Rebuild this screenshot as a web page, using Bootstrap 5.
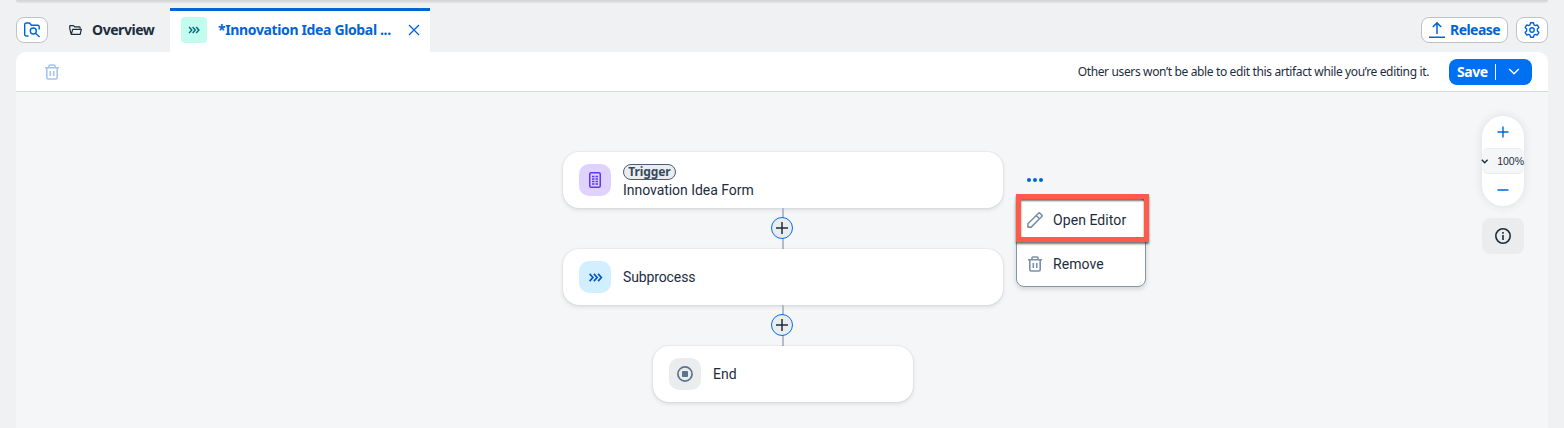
<!DOCTYPE html>
<html lang="en">
<head>
<meta charset="utf-8">
<meta name="viewport" content="width=device-width, initial-scale=1">
<title>Process Builder</title>
<link rel="stylesheet" href="https://cdn.jsdelivr.net/npm/bootstrap@5.3.0/dist/css/bootstrap.min.css">
<style>
body{font-family:Roboto,"Liberation Sans",sans-serif;font-size:14px;line-height:18px;color:#1d2d3e;background:#eff1f2;height:428px;overflow:hidden}
svg{display:block;flex:none;fill:none;stroke:currentColor;overflow:visible}
.strong-text{font-family:"Noto Sans",sans-serif;font-weight:700;letter-spacing:-.44px}
.shell-edge{height:8px;margin:0 16px}
.shell-edge::before{content:"";display:block;height:3px;border-radius:0 0 6px 6px;background:linear-gradient(#d2d3d5,#e4e5e7)}
.shell-edge,.tab-strip{flex:none}
.tab-strip{height:44px;padding:0 16px}
.tool-btn{height:26px;margin-top:9px;padding:0;border:1px solid #bcc3ca;border-radius:8px;background:#fff;color:#0064d9;line-height:18px}
.square-btn{width:32px}
.release-btn{width:87px}
.tab-plain{width:122px;padding-left:21px}
.tab-active{width:260px;height:44px;background:#fff;border-top:3px solid #0064d9;padding:0 10px 3px 11px;color:#0064d9}
.tab-icon{width:26px;height:26px;border-radius:4px;background:#c2fcee;color:#046c7a}
.tab-title{margin-left:11px;letter-spacing:-.36px}
.page-panel{margin:0 16px;background:#f5f6f7;flex:1;border-radius:10px 10px 0 0}
.bar{height:40px;background:#fff;border-bottom:1px solid #d5dadd;border-radius:10px 10px 0 0;padding:0 16px 0 28px}
.note{font-family:"Noto Sans",sans-serif;font-size:12px;letter-spacing:-.36px}
.save-btn{width:83px;height:26px;margin-left:20px;background:#0070f2;border-radius:8px;color:#fff;border:0;padding:0 12px 0 8px}
.save-btn i{width:1px;height:16px;margin-left:7px;background:#fff}
.canvas{background:#f5f6f7;padding-top:60px}
.flow{padding-left:2px}
.node{width:440px;height:56px;border-radius:16px;background:#fff;padding-left:16px;box-shadow:0 0 2px rgba(34,53,72,.14),0 2px 4px rgba(34,53,72,.12)}
.node-end{width:260px}
.node-icon{width:32px;height:32px;border-radius:10px;margin-right:12px}
.trigger{width:53px;height:16px;margin-top:2px;border:1px solid #475e75;border-radius:8px;background:#eaecee;color:#354a5f;font-size:12px;line-height:14px;letter-spacing:-.1px}
.link-line{height:41px;width:2px;padding-bottom:2px;background:#b3bcca}
.plus{width:22px;height:22px;margin-left:-2px;border:1.5px solid #0070f2;border-radius:50%;background:#eaecee;flex:none}
.more{left:1011px;top:86px;color:#0064d9}
.popup{left:1000px;top:105px;width:130px;height:90px;border:1px solid #8396a8;border-radius:8px;background:#fff;box-shadow:0 2px 5px rgba(34,53,72,.18)}
.popup .entry{height:44px;padding-left:10px;gap:10px}
.popup svg{color:#7b91a8}
.callout{left:1000px;top:102px;width:133px;height:48px;border:5px solid #ff5a4b;box-shadow:0 2px 2px rgba(0,0,0,.55),inset 0 2px 2px rgba(0,0,0,.55)}
.zoomer{right:24px;top:24px;width:42px}
.pill{height:90px;background:#fff;border-radius:21px;box-shadow:0 0 10px rgba(34,53,72,.12);color:#0064d9}
.zoom-step{height:32px}
.percent{height:26px;border:1px solid #eaecee;border-left:0;border-right:0;border-radius:6px;background:#f5f6f7;font-size:10.500px;font-family:"Liberation Sans",sans-serif;color:#1d2d3e}
.info{height:36px;margin-top:12px;border-radius:8px;background:#eaecee}
</style>
</head>
<body class="d-flex flex-column">
<svg width="0" height="0" class="position-absolute"><defs>
<symbol id="bin" viewBox="0 0 16 16"><path d="M1 3.800h14M5 3.500V1.800Q5 1 5.800 1h4.400Q11 1 11 1.800v1.700M2.800 4v9.600Q2.800 15 4.200 15h7.600q1.400 0 1.400-1.400V4M6.300 7v5M9.700 7v5" fill="none" stroke="currentColor" stroke-width="1.600"/></symbol>
<symbol id="chevrons" viewBox="0 0 16 10"><path d="M1.500 1l3.600 4-3.600 4M6.200 1l3.600 4-3.600 4M10.900 1l3.600 4-3.600 4" fill="none" stroke="currentColor" stroke-width="1.900"/></symbol>
</defs></svg>
<div class="shell-edge"></div>
<header class="tab-strip d-flex align-items-start">
  <button class="tool-btn square-btn d-flex align-items-center justify-content-center" aria-label="Browse">
    <svg width="16" height="16" viewBox="0 0 16 16" stroke-width="1.400"><path d="M4.500 14H2.300Q.7 14 .7 12.400V2.500Q.7 1 2.200 1h3.300l1.900 2.200h6.300q1.500 0 1.500 1.500v2.800M11.500 11.200L15.600 15"/><circle cx="9.300" cy="9" r="3"/></svg>
  </button>
  <div class="tab-plain d-flex align-items-center h-100">
    <svg width="13" height="10" viewBox="0 0 13 10" stroke-width="1.200"><path d="M2 9L.7 2.800V1.400Q.7.600 1.500.6h2.900l1.300 1.200h4.600q.8 0 .8.800v1M2.300 9.300h8.900l1.100-4.900H3.700z" stroke-linejoin="round"/></svg>
    <span class="strong-text text-nowrap" style="margin-left:10px">Overview</span>
  </div>
  <div class="tab-active d-flex align-items-center">
    <span class="tab-icon d-flex align-items-center justify-content-center"><svg width="12" height="8"><use href="#chevrons"/></svg></span>
    <span class="strong-text tab-title text-nowrap">*Innovation Idea Global ...</span>
    <svg class="ms-auto" width="12" height="12" viewBox="0 0 12 12" stroke-width="1.300"><path d="M1 1l10 10M11 1L1 11"/></svg>
  </div>
  <div class="d-flex ms-auto gap-2">
    <button class="tool-btn release-btn d-flex align-items-center">
      <svg style="margin-left:7px" width="16" height="16" viewBox="0 0 16 16" stroke-width="1.500"><path d="M0 15.200h16M8 12V1M3.800 5L8 .900 12.200 5"/></svg>
      <span class="strong-text" style="margin-left:5px;letter-spacing:-.54px">Release</span>
    </button>
    <button class="tool-btn square-btn d-flex align-items-center justify-content-center" aria-label="Settings">
      <svg width="16" height="16" viewBox="0 0 16 16" stroke-width="1.400" stroke-linejoin="round"><path d="M6.500.8h3l.5 2 1.400.8 2-.6 1.500 2.600L13.400 7v2l1.500 1.400-1.500 2.600-2-.6-1.400.8-.5 2h-3l-.5-2-1.400-.8-2 .6-1.500-2.600L2.600 9V7L1.100 5.600 2.600 3l2 .6L6 2.800z"/><circle cx="8" cy="8" r="2.200"/></svg>
    </button>
  </div>
</header>
<main class="page-panel d-flex flex-column">
  <div class="bar d-flex align-items-center">
    <svg width="16" height="16" style="color:#a6c4f1"><use href="#bin"/></svg>
    <span class="note ms-auto text-nowrap">Other users won’t be able to edit this artifact while you’re editing it.</span>
    <button class="save-btn d-flex align-items-center">
      <span class="strong-text">Save</span><i></i>
      <svg class="ms-auto" width="12" height="7" viewBox="0 0 12 7" stroke-width="1.500"><path d="M1.200 1L6 5.800 10.800 1"/></svg>
    </button>
  </div>
  <section class="canvas position-relative flex-fill">
    <div class="flow d-flex flex-column align-items-center">
      <article class="node d-flex align-items-center">
        <span class="node-icon d-flex align-items-center justify-content-center" style="background:#dfd2ff;color:#5d36ff"><svg width="12" height="16" viewBox="0 0 12 16" stroke-width="1.500"><rect x=".75" y=".75" width="10.500" height="14.500" rx="1.500"/><path d="M3 4.500h2.500M6.500 4.500H9M3 7h2.500M6.500 7H9M3 9.500h2.500M6.500 9.500H9M3 12h2.500M6.500 12H9" stroke-width="1.300"/></svg></span>
        <div><div class="trigger strong-text text-center">Trigger</div><div style="margin-top:1px;letter-spacing:-.04px">Innovation Idea Form</div></div>
      </article>
      <div class="link-line d-flex align-items-center justify-content-center"><span class="plus d-flex align-items-center justify-content-center"><svg width="12" height="12" viewBox="0 0 12 12" stroke-width="1.500"><path d="M6 0v12M0 6h12"/></svg></span></div>
      <article class="node d-flex align-items-center">
        <span class="node-icon d-flex align-items-center justify-content-center" style="background:#d1efff;color:#0057d2"><svg width="15" height="9"><use href="#chevrons"/></svg></span>
        <span style="letter-spacing:-.12px">Subprocess</span>
      </article>
      <div class="link-line d-flex align-items-center justify-content-center"><span class="plus d-flex align-items-center justify-content-center"><svg width="12" height="12" viewBox="0 0 12 12" stroke-width="1.500"><path d="M6 0v12M0 6h12"/></svg></span></div>
      <article class="node node-end d-flex align-items-center">
        <span class="node-icon d-flex align-items-center justify-content-center" style="background:#eaecee;color:#5b738b"><svg width="16" height="16" viewBox="0 0 16 16" stroke-width="1.700"><circle cx="8" cy="8" r="7.100"/><rect x="5" y="5" width="6" height="6" rx=".8" fill="currentColor" stroke="none"/></svg></span>
        <span>End</span>
      </article>
    </div>
    <svg class="more position-absolute" width="16" height="4" viewBox="0 0 16 4"><g fill="currentColor" stroke="none"><circle cx="2" cy="2" r="2"/><circle cx="8" cy="2" r="2"/><circle cx="14" cy="2" r="2"/></g></svg>
    <div class="popup position-absolute">
      <div class="entry d-flex align-items-center"><svg width="16" height="16" viewBox="0 0 16 16" stroke-width="1.600" stroke-linejoin="round"><path d="M.900 15.100V11.800L11.500 1.200q.7-.7 1.400 0l1.900 1.900q.7.700 0 1.400L4.200 15.100zM9.200 3.500l3.300 3.300"/></svg><span style="letter-spacing:.07px">Open Editor</span></div>
      <div class="entry d-flex align-items-center"><svg width="16" height="16"><use href="#bin"/></svg><span style="letter-spacing:.07px">Remove</span></div>
    </div>
    <div class="callout position-absolute"></div>
    <div class="zoomer position-absolute">
      <div class="pill d-flex flex-column">
        <div class="zoom-step d-flex align-items-center justify-content-center"><svg width="12" height="12" viewBox="0 0 12 12" stroke-width="1.400"><path d="M6 .5v11M.5 6h11"/></svg></div>
        <div class="percent d-flex align-items-center justify-content-between"><svg width="7" height="5" viewBox="0 0 7 5" stroke-width="1.400"><path d="M-.2.700l2.900 3L5.600.7"/></svg><span>100%</span></div>
        <div class="zoom-step d-flex align-items-center justify-content-center"><svg width="12" height="2" viewBox="0 0 12 2" stroke-width="1.500"><path d="M.5 1h11"/></svg></div>
      </div>
      <div class="info d-flex align-items-center justify-content-center"><svg width="16" height="16" viewBox="0 0 16 16" stroke-width="1.600"><circle cx="8" cy="8" r="7.200"/><path d="M8 7v5M8 4v1.700"/></svg></div>
    </div>
  </section>
</main>
<script src="https://cdn.jsdelivr.net/npm/bootstrap@5.3.0/dist/js/bootstrap.bundle.min.js"></script>
</body>
</html>
